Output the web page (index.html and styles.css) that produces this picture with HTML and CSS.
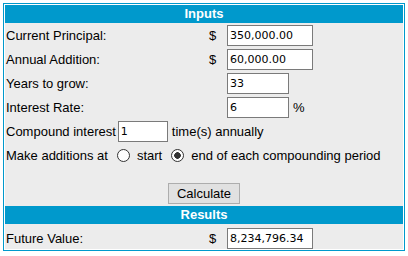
FILE: index.html
```html
<!DOCTYPE html>
<html>
<head>
  <meta charset="UTF-8">
  <title>Compound Interest Calculator</title>
  <link rel="stylesheet" href="styles.css">
</head>
<body>

  <div class="calc">
    <div class="head">Inputs</div>
    <div class="panel">
      <div class="row">
        <span class="label">Current Principal:</span>
        <span class="cur">$</span>
        <input class="field wide" type="text" value="350,000.00">
      </div>
      <div class="row">
        <span class="label">Annual Addition:</span>
        <span class="cur">$</span>
        <input class="field wide" type="text" value="60,000.00">
      </div>
      <div class="row">
        <span class="label">Years to grow:</span>
        <span class="cur"></span>
        <input class="field narrow" type="text" value="33">
      </div>
      <div class="row">
        <span class="label">Interest Rate:</span>
        <span class="cur"></span>
        <input class="field narrow" type="text" value="6">
        <span class="unit">%</span>
      </div>
      <div class="row">
        <span>Compound interest</span>
        <input class="field small" type="text" value="1">
        <span>time(s) annually</span>
      </div>
      <div class="row">
        <span>Make additions at</span>
        <label class="opt"><input type="radio" name="when" class="radio"> start</label>
        <label class="opt"><input type="radio" name="when" class="radio" checked> end of each compounding period</label>
      </div>
      <div class="actions">
        <button type="button">Calculate</button>
      </div>
    </div>
    <div class="head">Results</div>
    <div class="panel">
      <div class="row last">
        <span class="label">Future Value:</span>
        <span class="cur">$</span>
        <input class="field wide" type="text" value="8,234,796.34" readonly>
      </div>
    </div>
  </div>

</body>
</html>
```

FILE: styles.css
```css
body {
  margin: 3px;
  font-family: 'Liberation Sans', Arial, sans-serif;
  font-size: 13px;
  color: #000;
  background: #fff;
}
.calc {
  border: 1px solid #0099cc;
  padding: 1px;
  background: #fff;
}
.head {
  height: 18px;
  line-height: 18px;
  background: #0099cc;
  color: #fff;
  font-weight: bold;
  text-align: center;
}
.panel {
  background: #ececec;
}
.row {
  display: flex;
  align-items: center;
  height: 24px;
  padding-left: 1px;
  white-space: nowrap;
}
.row.last {
  height: 25px;
  padding-top: 3px;
  box-sizing: border-box;
}
.label {
  width: 203px;
}
.cur {
  width: 18px;
}
.unit {
  margin-left: 4px;
}
.field {
  box-sizing: border-box;
  height: 21px;
  margin: 0;
  padding: 0 2px;
  border: 1px solid #7a7a7a;
  background: #fff;
  font-family: 'DejaVu Sans', Verdana, sans-serif;
  font-size: 11px;
  color: #000;
  outline: none;
}
.wide {
  width: 86px;
}
.narrow {
  width: 62px;
}
.small {
  width: 50px;
  margin: 0 4px 0 2px;
}
.opt {
  display: flex;
  align-items: center;
  margin-left: 9px;
}
.radio {
  appearance: none;
  -webkit-appearance: none;
  width: 13px;
  height: 13px;
  margin: 0 7px 0 0;
  border: 1px solid #333;
  border-radius: 50%;
  background: #fff;
  box-sizing: border-box;
}
.radio:checked {
  background: radial-gradient(circle, #333 0 3px, #fff 3.6px);
}
.actions {
  height: 39px;
  padding-top: 16px;
  box-sizing: border-box;
  text-align: center;
}
button {
  width: 72px;
  height: 21px;
  padding: 0;
  border: 1px solid #adadad;
  background: #e1e1e1;
  font-family: 'Liberation Sans', Arial, sans-serif;
  font-size: 13px;
  color: #000;
}
```
